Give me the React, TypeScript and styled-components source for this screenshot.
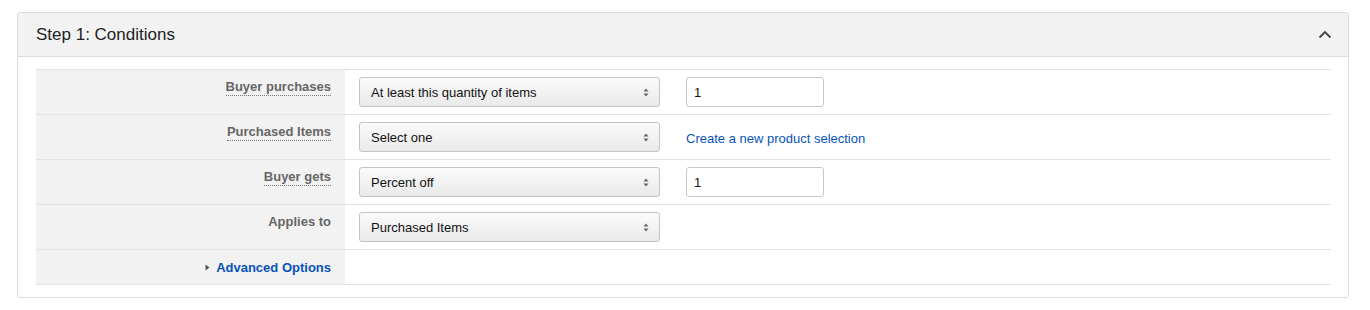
import React from 'react';
import styled, { createGlobalStyle } from 'styled-components';

const GlobalStyle = createGlobalStyle`
  body {
    margin: 0;
    background: #fff;
    font-family: 'Liberation Sans', Arial, sans-serif;
  }
`;

const Page = styled.div`
  padding: 12px 21px 12px 17px;
`;

const Panel = styled.section`
  border: 1px solid #dcdcdc;
  border-radius: 3px;
  background: #fff;
`;

const PanelHeader = styled.header`
  height: 43px;
  padding: 0 15px 0 18px;
  display: flex;
  align-items: center;
  justify-content: space-between;
  background: #f2f2f2;
  border-bottom: 1px solid #dcdcdc;
  border-radius: 3px 3px 0 0;
`;

const Title = styled.h2`
  margin: 0;
  font-size: 17px;
  font-weight: normal;
  color: #222;
`;

const CollapseButton = styled.button`
  display: flex;
  align-items: center;
  justify-content: center;
  width: 16px;
  height: 16px;
  padding: 0;
  border: none;
  background: none;
  cursor: pointer;
`;

const PanelBody = styled.div`
  padding: 12px 17px 12px 18px;
`;

const Table = styled.div`
  border-top: 1px solid #e3e3e3;
`;

const Row = styled.div<{ $short?: boolean }>`
  display: grid;
  grid-template-columns: 309px 1fr;
  height: ${(p) => (p.$short ? 34 : 44)}px;
  border-bottom: 1px solid #e3e3e3;
`;

const LabelCell = styled.div<{ $center?: boolean }>`
  background: #f2f2f2;
  padding: ${(p) => (p.$center ? '1px' : '9px')} 14px 0 0;
  display: flex;
  align-items: ${(p) => (p.$center ? 'center' : 'flex-start')};
  justify-content: flex-end;
  line-height: 16px;
`;

const Label = styled.span<{ $help?: boolean }>`
  font-size: 13px;
  font-weight: bold;
  color: #666;
  border-bottom: ${(p) => (p.$help ? '1px dotted #777' : 'none')};
`;

const FieldCell = styled.div`
  padding: 7px 0 0 14px;
  display: flex;
  align-items: flex-start;
  gap: 26px;
`;

const SelectBox = styled.div`
  box-sizing: border-box;
  width: 301px;
  height: 30px;
  padding: 0 10px 0 11px;
  display: flex;
  align-items: center;
  justify-content: space-between;
  border: 1px solid #c4c4c4;
  border-radius: 3px;
  background: linear-gradient(#fbfbfb, #e9e9e9);
  font-size: 13px;
  color: #111;
  cursor: pointer;
`;

const TextInput = styled.input`
  box-sizing: border-box;
  width: 138px;
  height: 30px;
  padding: 0 7px;
  border: 1px solid #c8c8c8;
  border-radius: 3px;
  font-family: inherit;
  font-size: 13px;
  color: #111;
  outline: none;
`;

const FieldLink = styled.a`
  padding-top: 2px;
  line-height: 30px;
  font-size: 13px;
  color: #0654ba;
  text-decoration: none;
`;

const Toggle = styled.a`
  display: flex;
  align-items: center;
  gap: 6px;
  font-size: 13px;
  font-weight: bold;
  color: #0654ba;
  text-decoration: none;
  cursor: pointer;
`;

const Empty = styled.div``;

const SelectArrows = () => (
  <svg width="6" height="9" viewBox="0 0 6 9">
    <path d="M3 0.5 L5.5 3.5 H0.5 Z M3 8.5 L5.5 5.5 H0.5 Z" fill="#666" />
  </svg>
);

const Select: React.FC<{ value: string }> = ({ value }) => (
  <SelectBox>
    <span>{value}</span>
    <SelectArrows />
  </SelectBox>
);

const rows = [
  { label: 'Buyer purchases', help: true, select: 'At least this quantity of items', extra: 'input' },
  { label: 'Purchased Items', help: true, select: 'Select one', extra: 'link' },
  { label: 'Buyer gets', help: true, select: 'Percent off', extra: 'input' },
  { label: 'Applies to', help: false, select: 'Purchased Items', extra: '' },
];

export default function App() {
  return (
    <>
      <GlobalStyle />
      <Page>
        <Panel>
          <PanelHeader>
            <Title>Step 1: Conditions</Title>
            <CollapseButton aria-label="Collapse">
              <svg width="14" height="9" viewBox="0 0 14 9">
                <path d="M1.5 7.5 L7 2 L12.5 7.5" fill="none" stroke="#444" strokeWidth="1.8" />
              </svg>
            </CollapseButton>
          </PanelHeader>
          <PanelBody>
            <Table>
              {rows.map((r) => (
                <Row key={r.label}>
                  <LabelCell>
                    <Label $help={r.help}>{r.label}</Label>
                  </LabelCell>
                  <FieldCell>
                    <Select value={r.select} />
                    {r.extra === 'input' && <TextInput defaultValue="1" />}
                    {r.extra === 'link' && <FieldLink href="#">Create a new product selection</FieldLink>}
                  </FieldCell>
                </Row>
              ))}
              <Row $short>
                <LabelCell $center>
                  <Toggle>
                    <svg width="5" height="7" viewBox="0 0 5 7">
                      <path d="M0.5 0.5 L4.5 3.5 L0.5 6.5 Z" fill="#555" />
                    </svg>
                    Advanced Options
                  </Toggle>
                </LabelCell>
                <Empty />
              </Row>
            </Table>
          </PanelBody>
        </Panel>
      </Page>
    </>
  );
}
